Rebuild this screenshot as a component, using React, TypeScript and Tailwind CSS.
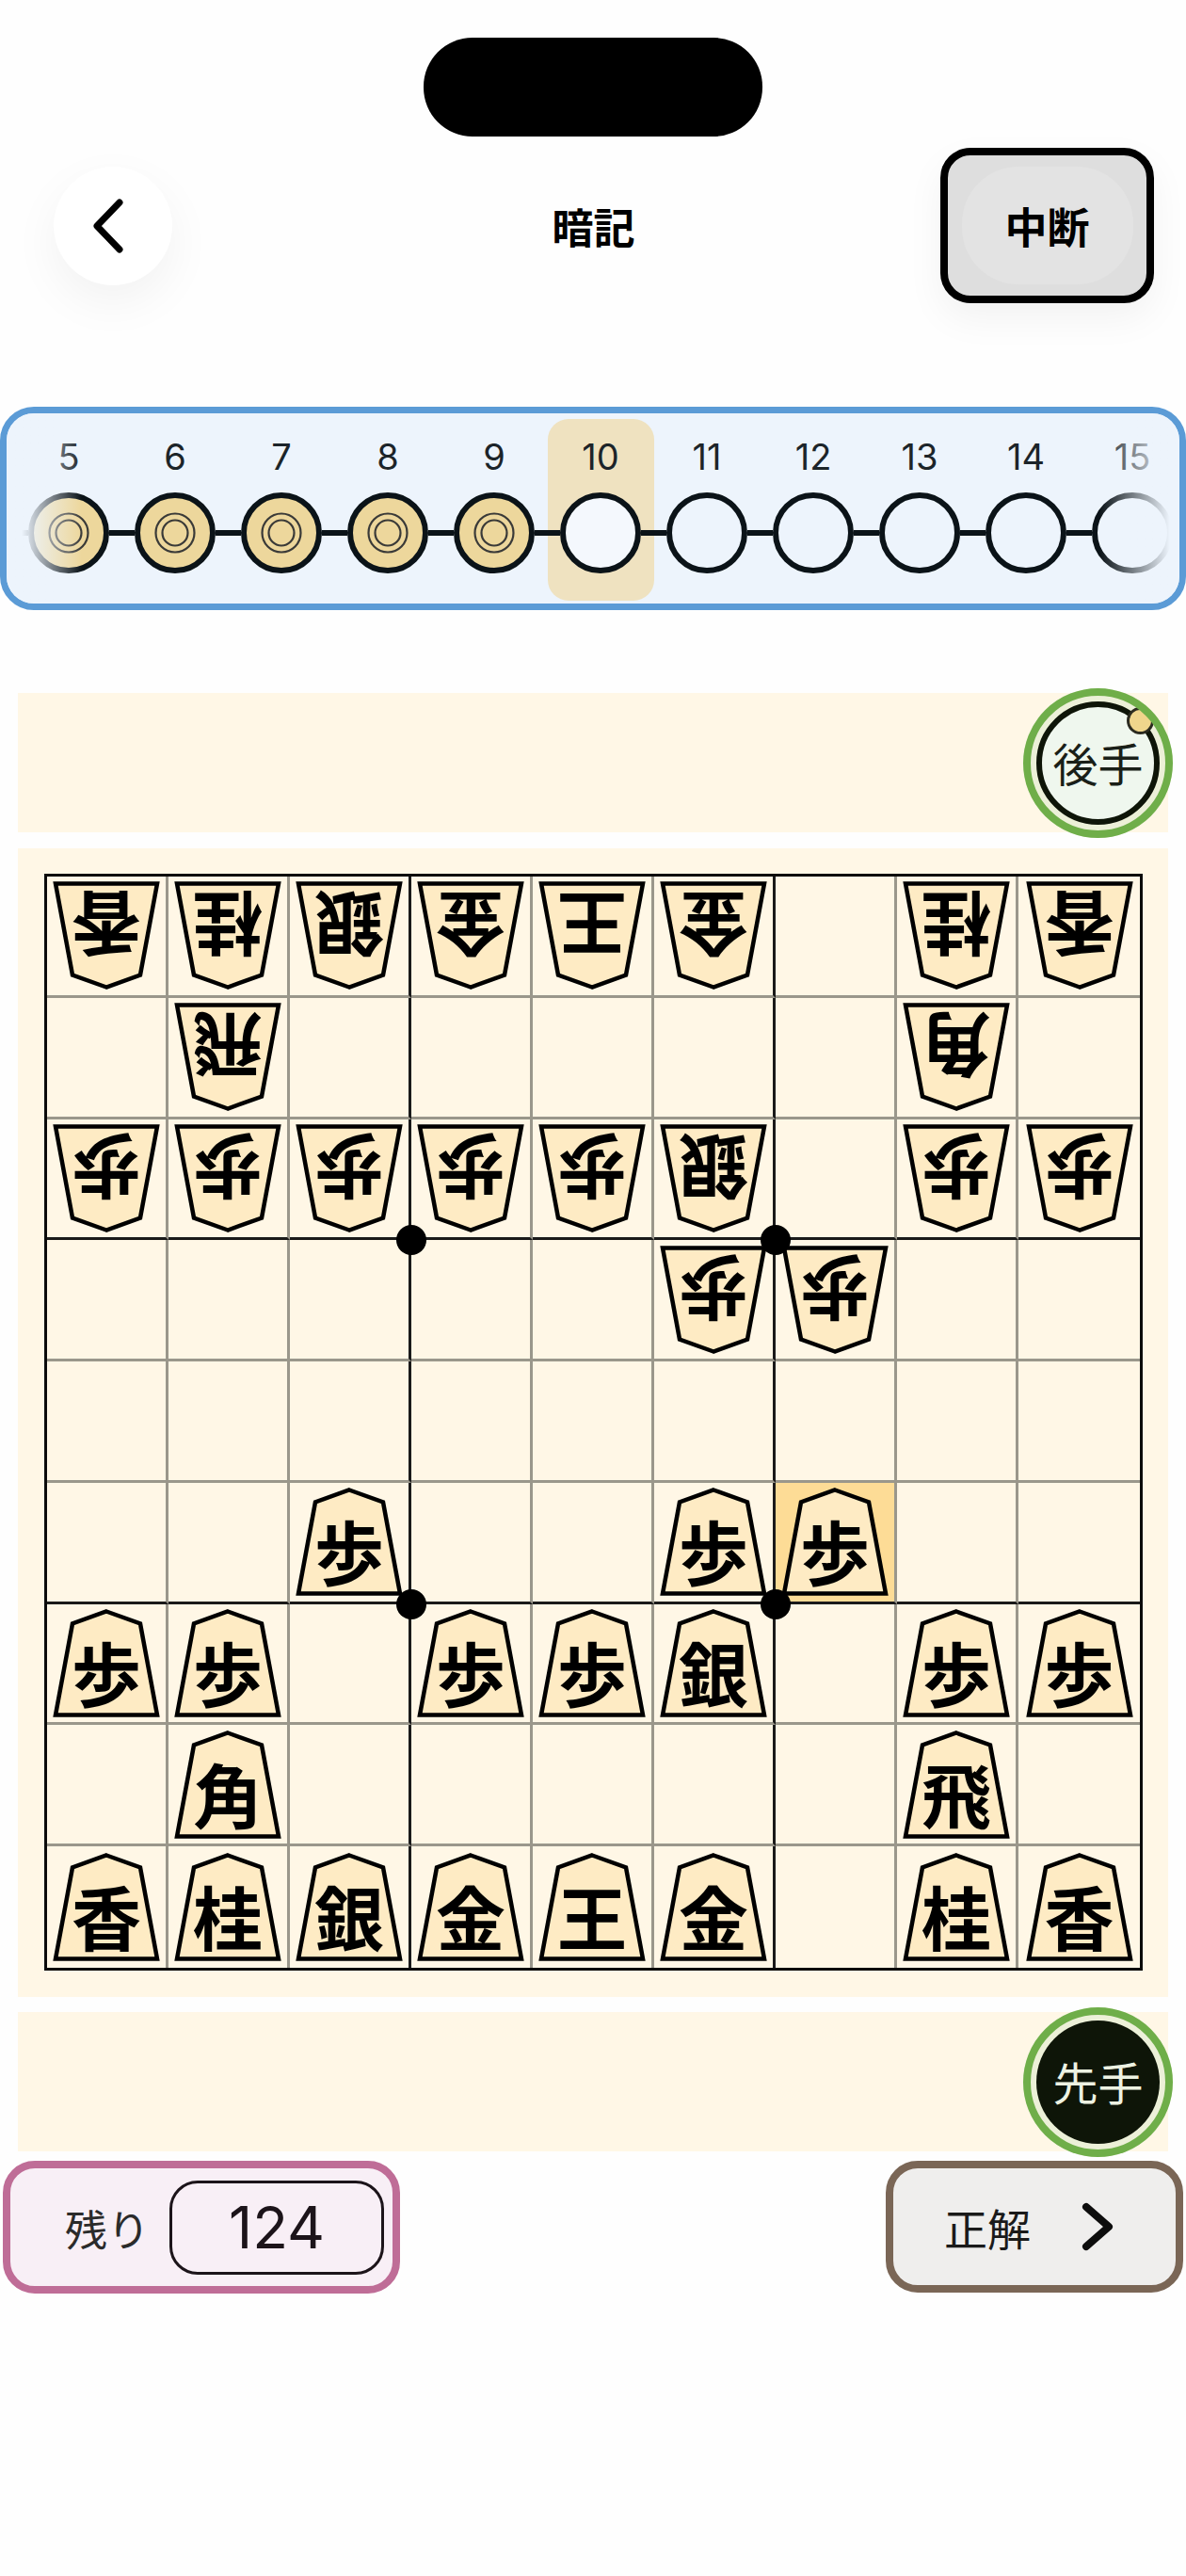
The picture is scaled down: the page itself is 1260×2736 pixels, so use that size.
import React from "react";

const cjk = "font-['Noto_Sans_CJK_JP',sans-serif]";
const latin = "font-['Inter','Noto_Sans_CJK_JP',sans-serif]";

type Cell = { t: string; g?: boolean } | null;

const g = (t: string): Cell => ({ t, g: true });
const s = (t: string): Cell => ({ t });
const _ = null;

const board: Cell[][] = [
  [g("香"), g("桂"), g("銀"), g("金"), g("王"), g("金"), _, g("桂"), g("香")],
  [_, g("飛"), _, _, _, _, _, g("角"), _],
  [g("歩"), g("歩"), g("歩"), g("歩"), g("歩"), g("銀"), _, g("歩"), g("歩")],
  [_, _, _, _, _, g("歩"), g("歩"), _, _],
  [_, _, _, _, _, _, _, _, _],
  [_, _, s("歩"), _, _, s("歩"), s("歩"), _, _],
  [s("歩"), s("歩"), _, s("歩"), s("歩"), s("銀"), _, s("歩"), s("歩")],
  [_, s("角"), _, _, _, _, _, s("飛"), _],
  [s("香"), s("桂"), s("銀"), s("金"), s("王"), s("金"), _, s("桂"), s("香")],
];

function Piece({ t, gote }: { t: string; gote?: boolean }) {
  return (
    <div className={`grid w-[114px] h-[115px] ${gote ? "rotate-180" : ""}`}>
      <svg viewBox="0 0 114 115" className="[grid-area:1/1] w-[114px] h-[115px]">
        <polygon
          points="57,2.5 93,15.5 111,112.5 3,112.5 21,15.5"
          fill="#feebc4"
          stroke="#000"
          strokeWidth="4.5"
          strokeLinejoin="miter"
        />
      </svg>
      <div
        className={`[grid-area:1/1] flex items-center justify-center pt-[17px] text-[74px] leading-none font-bold text-black ${cjk}`}
      >
        {t}
      </div>
    </div>
  );
}

function Board() {
  return (
    <div className="relative w-[1167px] h-[1165px] border-[3px] border-[#0b0b0b] grid grid-cols-9 grid-rows-9">
      {board.flatMap((row, r) =>
        row.map((c, x) => {
          const right =
            x === 8 ? "" : x === 2 || x === 5 ? "border-r-[3px] border-r-[#1a1a1a]" : "border-r-[3px] border-r-[#9a978b]";
          const bottom =
            r === 8 ? "" : r === 2 || r === 5 ? "border-b-[3px] border-b-[#1a1a1a]" : "border-b-[3px] border-b-[#9a978b]";
          const hl = r === 5 && x === 6 ? "bg-[#fddc96]" : "";
          return (
            <div key={`${r}-${x}`} className={`flex items-center justify-center min-w-0 min-h-0 ${right} ${bottom} ${hl}`}>
              {c && <Piece t={c.t} gote={c.g} />}
            </div>
          );
        })
      )}
      <div className="absolute left-[33.33%] top-[33.33%] w-[32px] h-[32px] -translate-x-1/2 -translate-y-1/2 rounded-full bg-black" />
      <div className="absolute left-[66.66%] top-[33.33%] w-[32px] h-[32px] -translate-x-1/2 -translate-y-1/2 rounded-full bg-black" />
      <div className="absolute left-[33.33%] top-[66.66%] w-[32px] h-[32px] -translate-x-1/2 -translate-y-1/2 rounded-full bg-black" />
      <div className="absolute left-[66.66%] top-[66.66%] w-[32px] h-[32px] -translate-x-1/2 -translate-y-1/2 rounded-full bg-black" />
    </div>
  );
}

function Step({ n }: { n: number }) {
  const done = n < 10;
  const current = n === 10;
  return (
    <div className={`w-[113px] h-[193px] shrink-0 pt-[20px] rounded-[22px] ${current ? "bg-[#efe2c0]" : ""}`}>
      <div className={`h-[40px] flex items-center justify-center text-[38px] leading-none text-[#1c2429] ${latin}`}>{n}</div>
      <div className="mt-[18px] flex items-center">
        <div className="flex-1 h-[6px] bg-[#0b1318]" />
        <div
          className={`w-[86px] h-[86px] shrink-0 rounded-full border-[6px] border-[#0b1318] flex items-center justify-center ${
            done ? "bg-[#edd79c]" : current ? "bg-[#f4f8fd]" : "bg-[#edf4fc]"
          }`}
        >
          {done && (
            <svg viewBox="0 0 44 44" className="w-[44px] h-[44px]">
              <circle cx="22" cy="22" r="20.5" fill="none" stroke="#3a3a38" strokeWidth="2.2" />
              <circle cx="22" cy="22" r="13.5" fill="none" stroke="#3a3a38" strokeWidth="2.2" />
            </svg>
          )}
        </div>
        {n !== 15 ? <div className="flex-1 h-[6px] bg-[#0b1318]" /> : <div className="flex-1" />}
      </div>
    </div>
  );
}

function Timeline() {
  const steps = [5, 6, 7, 8, 9, 10, 11, 12, 13, 14, 15];
  return (
    <div className="relative mt-[110px] w-[1260px] h-[216px] rounded-[36px] border-[7px] border-[#5b9bd6] bg-[#edf4fc] overflow-hidden pl-[9.5px] py-[6px] flex">
      {steps.map((n) => (
        <Step key={n} n={n} />
      ))}
      <div className="absolute left-0 top-0 bottom-0 w-[80px] bg-gradient-to-r from-[#edf4fc] from-[20%] to-transparent" />
      <div className="absolute right-0 top-0 bottom-0 w-[85px] bg-gradient-to-l from-[#edf4fc] from-[12%] to-transparent" />
    </div>
  );
}

function Player({ label, dark }: { label: string; dark?: boolean }) {
  return (
    <div className="relative w-[159px] h-[159px] shrink-0 -mr-[5px] rounded-full bg-[#ecf0d8] p-[14px]">
      <div
        className={`w-full h-full rounded-full flex items-center justify-center text-[48px] leading-none pb-[2px] whitespace-nowrap ${cjk} ${
          dark ? "bg-[#0e1508] text-[#edf2e2]" : "border-[6px] border-[#0e1508] bg-[#eff7ee] text-[#1a1f18]"
        }`}
      >
        {label}
      </div>
      {!dark && (
        <div className="absolute left-[110px] top-[20px] w-[29px] h-[29px] rounded-full border-[3px] border-[#2b2b20] bg-[#efd58c]" />
      )}
      <div className="absolute inset-0 rounded-full border-[8px] border-[#6fae49]" />
    </div>
  );
}

function Band({ children, top }: { children: React.ReactNode; top: string }) {
  return (
    <div className={`${top} ml-[19px] w-[1222px] h-[148px] bg-[#fff7e6] flex items-center justify-end`}>{children}</div>
  );
}

export default function App() {
  return (
    <div className="w-[1260px] h-[2736px] bg-[#fefefe] overflow-hidden">
      <div className="pt-[40px]">
        <div className="mx-auto w-[360px] h-[105px] rounded-[52px] bg-black" />
      </div>

      <div className="mt-[12px] h-[165px] pl-[57px] pr-[34px] flex items-center">
        <div className="flex-1">
          <div className="w-[126px] h-[126px] rounded-full bg-white shadow-[0_18px_50px_rgba(0,0,0,0.05)] flex items-center justify-center">
            <svg viewBox="0 0 40 62" className="w-[40px] h-[62px] mr-[8px]">
              <path d="M31 6 L7 31 L31 56" fill="none" stroke="#000" strokeWidth="7" strokeLinecap="round" strokeLinejoin="round" />
            </svg>
          </div>
        </div>
        <div className={`-translate-x-[11px] text-[44px] leading-none font-bold text-black ${cjk}`}>暗記</div>
        <div className="flex-1 flex justify-end">
          <div className="w-[227px] h-[165px] rounded-[32px] border-[8px] border-black bg-[#dedede] shadow-[0_16px_40px_rgba(0,0,0,0.05)] flex items-center justify-center">
            <div className={`w-[182px] h-[125px] rounded-[60px] bg-[#e3e3e3] flex items-center justify-center text-[45px] leading-none font-bold text-black ${cjk}`}>
              中断
            </div>
          </div>
        </div>
      </div>

      <Timeline />

      <Band top="mt-[88px]">
        <Player label="後手" />
      </Band>

      <div className="mt-[17px] ml-[19px] w-[1222px] h-[1220px] bg-[#fff7e6] pt-[27px] pl-[28px]">
        <Board />
      </div>

      <Band top="mt-[16px]">
        <Player label="先手" dark />
      </Band>

      <div className="mt-[10px] px-[3px] flex items-start justify-between">
        <div className="w-[422px] h-[141px] rounded-[34px] border-[8px] border-[#bf6d97] bg-[#f8eff6] flex items-center pl-[58px] pt-[1px]">
          <span className={`text-[45px] leading-none text-[#2b2b2b] whitespace-nowrap ${cjk}`}>残り</span>
          <div className={`ml-[21px] w-[228px] h-[100px] rounded-[30px] border-[3px] border-[#1c141a] flex items-center justify-center text-[62px] leading-none text-[#1c141a] ${latin}`}>
            124
          </div>
        </div>
        <div className="w-[316px] h-[140px] rounded-[34px] border-[8px] border-[#7a6656] bg-[#efeeed] flex items-center pl-[54px]">
          <span className={`text-[46px] leading-none text-[#1a1a1a] whitespace-nowrap ${cjk}`}>正解</span>
          <svg viewBox="0 0 34 52" className="w-[34px] h-[52px] ml-[54px]">
            <path d="M5 5 L29 26 L5 47" fill="none" stroke="#0d0d0d" strokeWidth="8" strokeLinecap="round" strokeLinejoin="round" />
          </svg>
        </div>
      </div>
    </div>
  );
}
